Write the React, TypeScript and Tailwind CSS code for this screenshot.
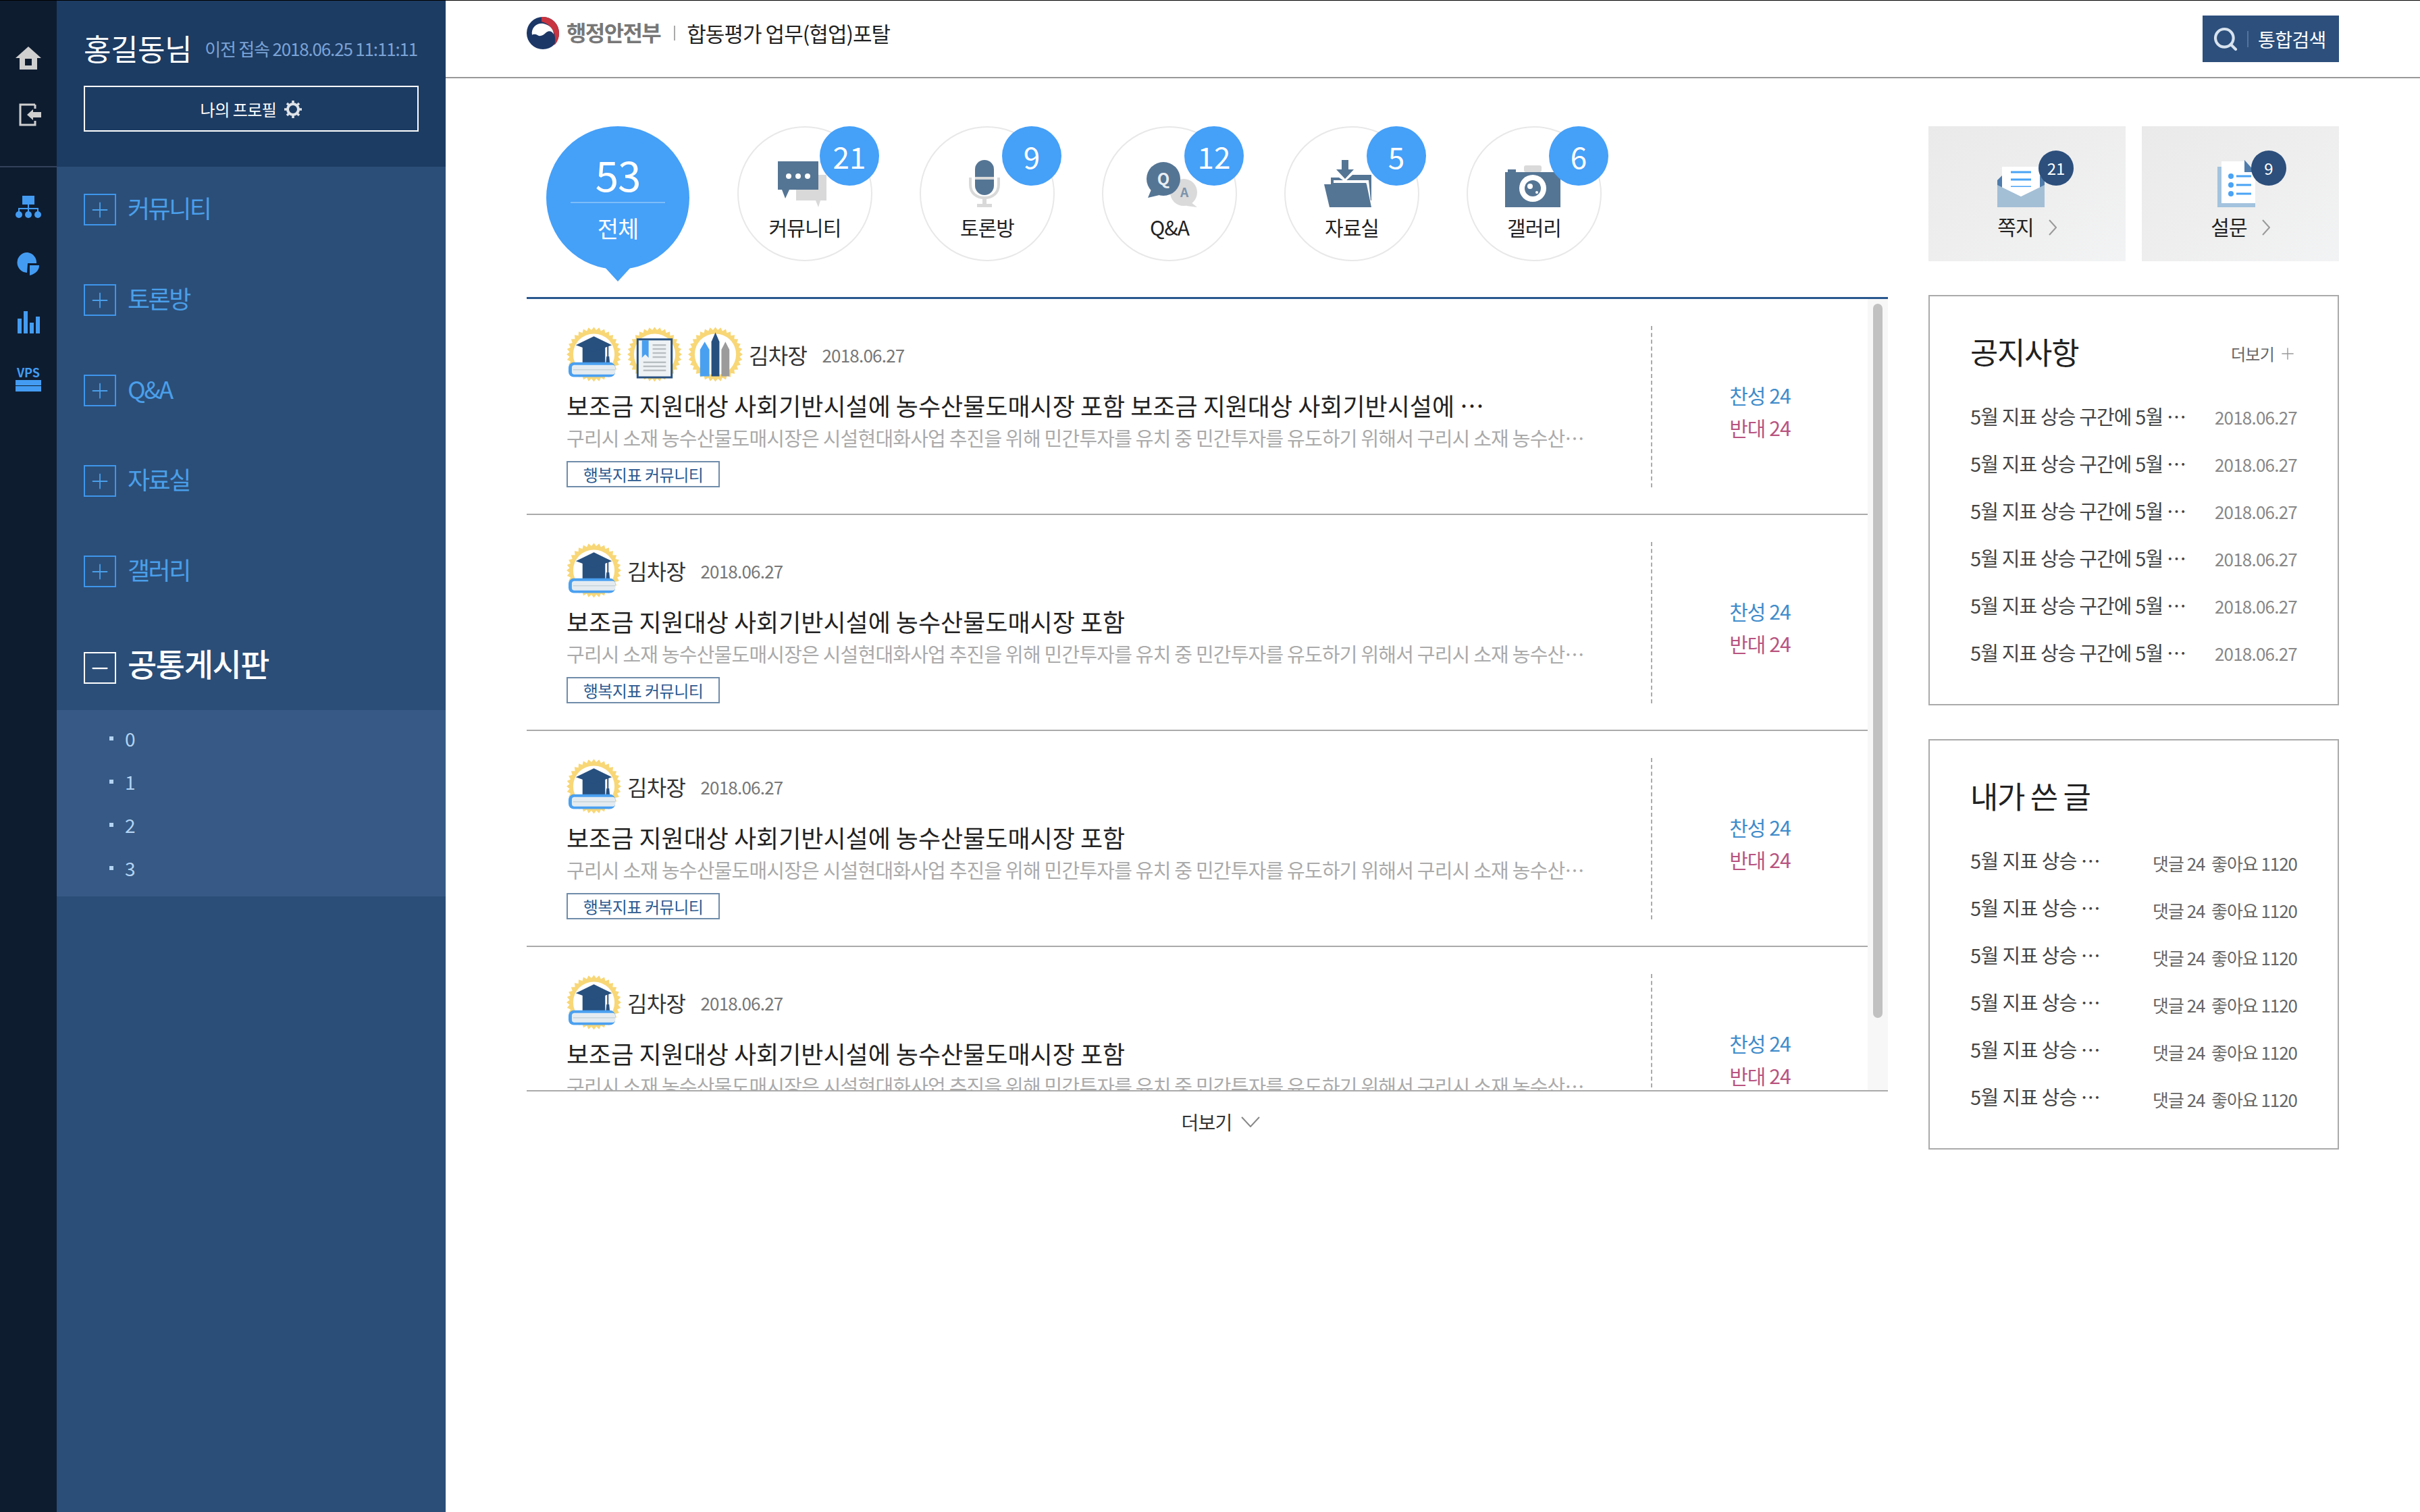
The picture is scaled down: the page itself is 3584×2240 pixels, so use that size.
import { Plus, Minus, Search } from 'lucide-react'
import type { ReactNode } from 'react'

const sealPoints = Array.from({ length: 64 }, (_, i) => {
  const r = i % 2 === 0 ? 41 : 36.5
  const a = (i * Math.PI) / 32
  return `${41 + r * Math.sin(a)},${41 - r * Math.cos(a)}`
}).join(' ')

function Seal({ children }: { children: ReactNode }) {
  return (
    <svg width="81" height="84" viewBox="0 0 82 82" className="shrink-0">
      <polygon points={sealPoints} fill="#f8d777" />
      <circle cx="41" cy="41" r="31" fill="#ffffff" />
      {children}
    </svg>
  )
}

function CapBadge() {
  return (
    <Seal>
      <rect x="24" y="28" width="34" height="26" fill="#27507f" />
      <path d="M41 14 L68 27 L41 37 L14 27 Z" fill="#27507f" />
      <path d="M62 28 V44" stroke="#27507f" strokeWidth="2" />
      <path d="M60 44 h4 l1 11 h-6 Z" fill="#27507f" />
      <rect x="3" y="53" width="70" height="22" rx="8" fill="#4aa0f0" />
      <rect x="8" y="57" width="65" height="14" rx="4" fill="#e4ecf1" />
      <path d="M10 64 H73" stroke="#c8d3da" strokeWidth="1.5" />
    </Seal>
  )
}

function BookBadge() {
  return (
    <Seal>
      <rect x="14" y="17" width="54" height="60" fill="#27507f" />
      <rect x="17" y="20" width="48" height="54" fill="#eef2f4" />
      <path d="M22 20 H32 V46 L27 41 L22 46 Z" fill="#4aa0f0" />
      <path d="M38 27 H58 M38 33 H58 M38 39 H58 M38 45 H58 M24 53 H58 M24 59 H58 M24 65 H58" stroke="#b9bfc3" strokeWidth="2.5" />
    </Seal>
  )
}

function PencilBadge() {
  return (
    <Seal>
      <path d="M18 34 L25 22 L32 34 V74 H18 Z" fill="#4aa0f0" />
      <path d="M35 22 L41 8 L47 22 V74 H35 Z" fill="#27507f" />
      <path d="M50 34 L56 22 L62 34 V74 H50 Z" fill="#9b9b9b" />
    </Seal>
  )
}

function ChatIcon() {
  return (
    <svg width="72" height="68" viewBox="0 0 72 68">
      <path d="M27 20 H72 V58 H63 L60 68 L56 58 H27 Z" fill="#d9d9d9" />
      <path d="M0 0 H60 V42 H17 L11 55 L6 42 H0 Z" fill="#557594" />
      <circle cx="16" cy="22" r="4" fill="#fff" />
      <circle cx="30" cy="22" r="4" fill="#fff" />
      <circle cx="44" cy="22" r="4" fill="#fff" />
    </svg>
  )
}

function MicIcon() {
  return (
    <svg width="46" height="70" viewBox="0 0 46 70">
      <path d="M2 26 V36 C2 50 12 56 23 56 C34 56 44 50 44 36 V26" fill="none" stroke="#d9d9d9" strokeWidth="4" />
      <rect x="20" y="54" width="6" height="12" fill="#d9d9d9" />
      <rect x="12" y="65" width="22" height="5" fill="#d9d9d9" />
      <rect x="9" y="0" width="28" height="52" rx="14" fill="#557594" />
      <rect x="9" y="25" width="28" height="4" fill="#d9d9d9" />
    </svg>
  )
}

function QaIcon() {
  return (
    <svg width="76" height="68" viewBox="0 0 76 68" className="ml-[14px]">
      <circle cx="56" cy="46" r="20" fill="#dadada" />
      <path d="M66 60 L76 68 L60 66 Z" fill="#dadada" />
      <circle cx="26" cy="26" r="25" fill="#557594" />
      <path d="M8 42 L3 54 L20 50 Z" fill="#557594" />
      <text x="26" y="35" textAnchor="middle" fontSize="24" fontWeight="700" fill="#e8eef3" fontFamily="'Noto Sans CJK KR', sans-serif">Q</text>
      <text x="57" y="53" textAnchor="middle" fontSize="19" fontWeight="700" fill="#7d94ab" fontFamily="'Noto Sans CJK KR', sans-serif">A</text>
    </svg>
  )
}

function FolderIcon() {
  return (
    <svg width="74" height="70" viewBox="0 0 74 70">
      <path d="M26 0 H36 V14 H44 L31 28 L18 14 H26 Z" fill="#557594" />
      <path d="M10 26 H22 L31 32 L42 22 H70 V60 H10 Z" fill="#557594" />
      <path d="M14 30 H66 V34 H14 Z" fill="#fff" />
      <path d="M62 30 H66 L69 60 H65 Z" fill="#fff" />
      <path d="M0 36 H63 L70 70 H8 Z" fill="#557594" />
    </svg>
  )
}

function CameraIcon() {
  return (
    <svg width="82" height="62" viewBox="0 0 82 62" className="ml-[3px]">
      <rect x="28" y="0" width="26" height="10" rx="3" fill="#dadada" />
      <rect x="4" y="6" width="12" height="6" fill="#557594" />
      <rect x="0" y="10" width="82" height="52" fill="#557594" />
      <circle cx="41" cy="34" r="20" fill="#fff" />
      <circle cx="41" cy="34" r="12" fill="#557594" />
      <circle cx="37" cy="31" r="4" fill="#fff" />
      <circle cx="47" cy="40" r="2" fill="#fff" />
    </svg>
  )
}

function LetterIcon() {
  return (
    <svg width="70" height="62" viewBox="0 0 70 62">
      <path d="M0 22 L10 12 H60 L70 22 V40 H0 Z" fill="#4f7cab" />
      <rect x="7" y="2" width="56" height="48" fill="#fff" />
      <path d="M20 10 H50 M20 21 H50 M20 32 H50" stroke="#4aa3f5" strokeWidth="3" />
      <path d="M0 29 L35 46 L70 29 V62 H0 Z" fill="#a3bfd6" />
      <path d="M7 32 H63 L35 46 Z" fill="#fff" />
    </svg>
  )
}

function DocIcon() {
  return (
    <svg width="56" height="70" viewBox="0 0 56 70">
      <path d="M0 10 H8 V64 H56 V70 H0 Z" fill="#a3c3de" />
      <path d="M6 2 H40 L56 18 V64 H6 Z" fill="#fff" />
      <path d="M40 0 L56 18 H40 Z" fill="#4f7cab" />
      <circle cx="20" cy="24" r="4" fill="#4aa3f5" />
      <circle cx="20" cy="37" r="4" fill="#4aa3f5" />
      <circle cx="20" cy="50" r="4" fill="#4aa3f5" />
      <path d="M28 24 H50 M28 37 H50 M28 50 H50" stroke="#4aa3f5" strokeWidth="3" />
    </svg>
  )
}

function RailHome() {
  return (
    <svg width="38" height="34" viewBox="0 0 38 34">
      <path d="M19 0 L38 17 H32 V34 H6 V17 H0 Z" fill="#cfcfcf" />
      <rect x="14" y="18" width="10" height="10" fill="#0e1c30" />
    </svg>
  )
}

function RailLogout() {
  return (
    <svg width="33" height="34" viewBox="0 0 33 34">
      <path d="M24 2 H2 V32 H24 V26" fill="none" stroke="#cfcfcf" strokeWidth="3" />
      <path d="M24 2 V8" stroke="#cfcfcf" strokeWidth="3" />
      <path d="M12 17 L21 9 V13 H33 V21 H21 V25 Z" fill="#cfcfcf" />
    </svg>
  )
}

function RailOrg() {
  return (
    <svg width="38" height="34" viewBox="0 0 38 34">
      <rect x="10" y="0" width="18" height="13" fill="#439cf2" />
      <path d="M19 13 V24 M5 24 V19 H33 V24" fill="none" stroke="#439cf2" strokeWidth="2" />
      <circle cx="5" cy="28" r="5" fill="#439cf2" />
      <circle cx="19" cy="28" r="5" fill="#439cf2" />
      <circle cx="33" cy="28" r="5" fill="#439cf2" />
    </svg>
  )
}

function RailPie() {
  return (
    <svg width="34" height="34" viewBox="0 0 34 34">
      <path d="M16 0 A15 15 0 1 0 15 30 L16 16 H29 A15 15 0 0 0 16 0 Z" fill="#439cf2" />
      <path d="M19 19 H33 Q33 30 19 34 Z" fill="#439cf2" />
    </svg>
  )
}

function RailBars() {
  return (
    <svg width="34" height="33" viewBox="0 0 34 33">
      <rect x="1" y="11" width="6" height="22" fill="#439cf2" />
      <rect x="10" y="0" width="6" height="33" fill="#439cf2" />
      <rect x="19" y="17" width="6" height="16" fill="#439cf2" />
      <rect x="28" y="8" width="6" height="25" fill="#439cf2" />
    </svg>
  )
}

function Gear() {
  return (
    <svg width="26" height="26" viewBox="0 0 26 26" className="text-[#dfe3e8]">
      <circle cx="13" cy="13" r="8" fill="none" stroke="currentColor" strokeWidth="4" />
      <path d="M13 0 V5 M13 21 V26 M0 13 H5 M21 13 H26 M4 4 L7.5 7.5 M18.5 18.5 L22 22 M22 4 L18.5 7.5 M7.5 18.5 L4 22" stroke="currentColor" strokeWidth="3.5" />
    </svg>
  )
}

function Taegeuk() {
  return (
    <svg width="48" height="48" viewBox="0 0 48 48" className="shrink-0">
      <circle cx="24" cy="24" r="24" fill="#1c3766" />
      <path d="M22 0 C36 -1 48 10 48 24 C48 32 45 38 41 42 C45 30 40 12 22 7 Z" fill="#c8343f" />
      <path d="M8 27 C6 15 16 8 25 10 C34 12 40 18 40 26 C38 21 33 20 29 23 C25 27 20 30 16 27 C14 26 10 25 8 27 Z" fill="#ffffff" />
    </svg>
  )
}

function StatIcon({ children, count, label }: { children: ReactNode; count: number; label: string }) {
  return (
    <li className="relative flex h-[200px] w-[200px] flex-col items-center rounded-full border-2 border-[#e8e8e8] pt-[46px]">
      <div className="flex h-[72px] w-full items-end justify-center pr-[8px]">{children}</div>
      <span className="mt-[9px] text-[30px] leading-[40px] tracking-[-0.03em] text-[#222]">{label}</span>
      <span className="absolute left-[120px] -top-[2px] flex h-[88px] w-[88px] items-center justify-center rounded-full bg-[#45a0f8] text-[44px] text-white">
        {count}
      </span>
    </li>
  )
}

function SideCard({ children, count, label, iconClass, badgeClass }: { children: ReactNode; count: number; label: string; iconClass: string; badgeClass: string }) {
  return (
    <div className="flex h-[200px] w-[292px] flex-col items-center bg-gradient-to-br from-[#eaeaea] via-[#eeeeee] to-[#f2f3f4] pt-[50px]">
      <div className={`relative flex h-[70px] items-end ${iconClass}`}>
        {children}
        <span className={`absolute -top-[14px] flex h-[52px] w-[52px] items-center justify-center rounded-full bg-[#2c4f7c] text-[24px] text-white ${badgeClass}`}>
          {count}
        </span>
      </div>
      <div className="mt-[8px] flex items-center text-[30px] leading-[40px] tracking-[-0.03em] text-[#222]">
        {label}
        <svg width="12" height="24" viewBox="0 0 12 24" className="ml-[22px] mt-[4px]">
          <path d="M1 1 L11 12 L1 23" fill="none" stroke="#999" strokeWidth="2" />
        </svg>
      </div>
    </div>
  )
}

function PostRow({ badges }: { badges: ReactNode[] }) {
  return (
    <article className="flex h-[320px] shrink-0 border-b-2 border-[#aaaaaa] pl-[59px] pt-[40px]">
      <div className="w-[1606px] min-w-0">
        <div className="flex h-[86px] items-center gap-[9px] pb-[2px]">
          {badges}
          <span className="text-[32px] tracking-[-0.02em] text-[#333]">김차장</span>
          <span className="ml-[13px] text-[26px] tracking-[-0.03em] text-[#777]">2018.06.27</span>
        </div>
        <h3 className="mt-[8px] h-[46px] w-[1360px] truncate text-[36px] font-normal leading-[46px] tracking-normal text-[#222]">
          보조금 지원대상 사회기반시설에 농수산물도매시장 포함{badges.length > 1 ? ' 보조금 지원대상 사회기반시설에 농수산물도매시장 포함' : ''}
        </h3>
        <p className="mt-[5px] h-[40px] w-[1510px] truncate text-[29px] leading-[40px] tracking-[-0.027em] text-[#aaaaaa]">
          구리시 소재 농수산물도매시장은 시설현대화사업 추진을 위해 민간투자를 유치 중 민간투자를 유도하기 위해서 구리시 소재 농수산물도매시장은 시설현대화사업
        </p>
        <span className="mt-[15px] inline-flex h-[39px] w-[227px] items-center justify-center border-2 border-[#6f8cab] text-[24px] tracking-[-0.02em] text-[#2c5a8f]">
          행복지표 커뮤니티
        </span>
      </div>
      <div className="flex h-[239px] w-[321px] flex-col items-center justify-center gap-[5px] border-l-2 border-dashed border-[#aaaaaa] pt-[13px] text-[30px] leading-[43px] tracking-[-0.03em]">
        <span className="text-[#3f8ccb]">찬성 24</span>
        <span className="text-[#b85480]">반대 24</span>
      </div>
    </article>
  )
}

function MenuItem({ label }: { label: string }) {
  return (
    <li className="flex h-[134px] items-start gap-[17px] pt-[38px] text-[36px] leading-[44px] tracking-[-0.07em] text-[#4a9fea]">
      <span className="mt-[2px] flex h-[47px] w-[48px] items-center justify-center border-2 border-[#3f96ec]">
        <Plus size={36} strokeWidth={1.2} />
      </span>
      {label}
    </li>
  )
}

export default function App() {
  const stats = [
    { label: '커뮤니티', count: 21, icon: <ChatIcon /> },
    { label: '토론방', count: 9, icon: <MicIcon /> },
    { label: 'Q&A', count: 12, icon: <QaIcon /> },
    { label: '자료실', count: 5, icon: <FolderIcon /> },
    { label: '갤러리', count: 6, icon: <CameraIcon /> },
  ]

  return (
    <div className="flex min-h-[2240px] w-[3584px] border-t border-black bg-white [font-family:'Noto_Sans_CJK_KR',sans-serif]">
      {/* icon rail */}
      <nav className="w-[84px] shrink-0 bg-[#0e1c30]">
        <div className="flex h-[247px] flex-col items-center border-b-2 border-[#33415a] pt-[68px]">
          <RailHome />
          <div className="ml-[4px] mt-[50px]">
            <RailLogout />
          </div>
        </div>
        <div className="flex flex-col items-center pt-[42px]">
          <RailOrg />
          <div className="mt-[50px]">
            <RailPie />
          </div>
          <div className="mt-[53px]">
            <RailBars />
          </div>
          <div className="mt-[47px] flex w-[38px] flex-col items-center">
            <span className="text-[18px] font-bold leading-[20px] text-[#439cf2]">VPS</span>
            <div className="mt-[2px] h-[8px] w-full bg-[#439cf2]" />
            <div className="mt-[1px] h-[8px] w-full bg-[#439cf2]" />
          </div>
        </div>
      </nav>

      {/* side menu */}
      <aside className="w-[576px] shrink-0 bg-[#2b4e78]">
        <div className="h-[246px] bg-[#1d3c63] px-[40px] pt-[46px]">
          <div className="flex items-center">
            <strong className="text-[44px] font-normal leading-[48px] tracking-[-0.01em] text-white">홍길동님</strong>
            <span className="ml-[19px] text-[26px] tracking-[-0.045em] text-[#7ba3d6]">이전 접속 2018.06.25 11:11:11</span>
          </div>
          <button type="button" className="mt-[32px] flex h-[68px] w-[496px] items-center justify-center gap-[12px] border-2 border-white pt-[2px] text-[24px] tracking-[-0.02em] text-white">
            나의 프로필
            <Gear />
          </button>
        </div>
        <ul className="px-[40px]">
          {['커뮤니티', '토론방', 'Q&A', '자료실', '갤러리'].map((label) => (
            <MenuItem key={label} label={label} />
          ))}
          <li className="flex h-[135px] items-start gap-[17px] pt-[42px] text-[47px] font-medium leading-[46px] tracking-[-0.03em] text-white">
            <span className="mt-[7px] flex h-[47px] w-[48px] items-center justify-center border-2 border-white">
              <Minus size={36} strokeWidth={1.5} />
            </span>
            공통게시판
          </li>
        </ul>
        <ul className="h-[276px] bg-[#365a85] pl-[78px] pt-[10px]">
          {[0, 1, 2, 3].map((n) => (
            <li key={n} className="flex h-[64px] items-center gap-[17px] text-[28px] text-[#b4d3f3]">
              <span className="h-[6px] w-[6px] bg-[#b4d3f3]" />
              {n}
            </li>
          ))}
        </ul>
      </aside>

      {/* main */}
      <main className="min-w-0 flex-1">
        <header className="flex h-[115px] items-start justify-between border-b-2 border-[#999999] px-[120px] pt-[22px]">
          <div className="flex items-center pt-[2px]">
            <Taegeuk />
            <span className="ml-[11px] -translate-y-[2px] text-[32px] font-bold tracking-[-0.05em] text-[#777]">행정안전부</span>
            <span className="ml-[20px] mr-[17px] h-[22px] w-[2px] bg-[#aaa]" />
            <span className="text-[31px] tracking-[-0.03em] text-[#222]">합동평가 업무(협업)포탈</span>
          </div>
          <button type="button" className="flex h-[69px] w-[202px] items-center bg-[#2c4f7c] pl-[14px] text-[28px] tracking-[-0.02em] text-white">
            <Search size={40} strokeWidth={2.5} className="text-[#d7e2ee]" />
            <span className="ml-[12px] mr-[14px] h-[24px] w-[2px] bg-[#54749b]" />
            통합검색
          </button>
        </header>

        <div className="flex gap-[60px] px-[120px] pt-[71px]">
          <section className="w-[2016px] shrink-0">
            <ul className="flex h-[253px] gap-[70px] pl-[29px]">
              <li className="relative mr-[1px] flex h-[212px] w-[212px] flex-col items-center rounded-full bg-[#45a0f8] pt-[36px] text-white">
                <span className="text-[62px] leading-[68px] tracking-[-0.02em]">53</span>
                <span className="mt-[8px] h-[2px] w-[140px] bg-[#7cbcf8]" />
                <span className="mt-[14px] text-[34px] leading-[46px] tracking-[-0.03em]">전체</span>
                <span className="absolute left-[84px] top-[206px] h-0 w-0 border-x-[22px] border-t-[24px] border-x-transparent border-t-[#45a0f8]" />
              </li>
              {stats.map((s) => (
                <StatIcon key={s.label} count={s.count} label={s.label}>
                  {s.icon}
                </StatIcon>
              ))}
            </ul>

            <div className="flex h-[1177px] border-b-2 border-t-[3px] border-b-[#aaaaaa] border-t-[#28578f]">
              <div className="w-[1986px] overflow-hidden">
                <PostRow badges={[<CapBadge key="cap" />, <BookBadge key="book" />, <PencilBadge key="pencil" />]} />
                <PostRow badges={[<CapBadge key="cap" />]} />
                <PostRow badges={[<CapBadge key="cap" />]} />
                <PostRow badges={[<CapBadge key="cap" />]} />
              </div>
              <div className="w-[30px] bg-[#f7f7f7] px-[8px] pt-[7px]">
                <div className="h-[1058px] rounded-full bg-[#c1c1c1]" />
              </div>
            </div>

            <button type="button" className="flex h-[90px] w-full items-center justify-center gap-[14px] pl-[40px] text-[28px] tracking-[-0.03em] text-[#333]">
              더보기
              <svg width="28" height="16" viewBox="0 0 28 16">
                <path d="M1 1 L14 15 L27 1" fill="none" stroke="#888" strokeWidth="2" />
              </svg>
            </button>
          </section>

          <aside className="w-[608px] shrink-0">
            <div className="flex gap-[24px]">
              <SideCard count={21} label="쪽지" iconClass="mr-[18px]" badgeClass="-right-[43px]">
                <LetterIcon />
              </SideCard>
              <SideCard count={9} label="설문" iconClass="mr-[12px]" badgeClass="-right-[46px]">
                <DocIcon />
              </SideCard>
            </div>

            <section className="mt-[50px] h-[608px] border-2 border-[#aaaaaa] pl-[60px] pr-[60px] pt-[52px]">
              <div className="flex h-[60px] items-center justify-between">
                <h2 className="text-[45px] font-normal tracking-[-0.03em] text-[#222]">공지사항</h2>
                <span className="flex items-center gap-[6px] pt-[5px] text-[24px] tracking-[-0.03em] text-[#666]">
                  더보기
                  <Plus size={28} strokeWidth={1.2} className="text-[#999]" />
                </span>
              </div>
              <ul className="mt-[31px]">
                {[0, 1, 2, 3, 4, 5].map((n) => (
                  <li key={n} className="flex h-[70px] items-center justify-between">
                    <span className="w-[320px] truncate text-[29px] tracking-[-0.03em] text-[#444]">5월 지표 상승 구간에 5월 지표 상승 구간에</span>
                    <span className="text-[26px] tracking-[-0.03em] text-[#888]">2018.06.27</span>
                  </li>
                ))}
              </ul>
            </section>

            <section className="mt-[50px] h-[608px] border-2 border-[#aaaaaa] pl-[60px] pr-[60px] pt-[52px]">
              <h2 className="flex h-[60px] items-center text-[45px] font-normal tracking-[-0.03em] text-[#222]">내가 쓴 글</h2>
              <ul className="mt-[31px]">
                {[0, 1, 2, 3, 4, 5].map((n) => (
                  <li key={n} className="flex h-[70px] items-center justify-between">
                    <span className="w-[194px] truncate text-[29px] tracking-[-0.02em] text-[#444]">5월 지표 상승 구간에 5월</span>
                    <span className="pt-[6px] text-[26px] tracking-[-0.04em] text-[#666]">댓글 24&nbsp; 좋아요 1120</span>
                  </li>
                ))}
              </ul>
            </section>
          </aside>
        </div>
      </main>
    </div>
  )
}
